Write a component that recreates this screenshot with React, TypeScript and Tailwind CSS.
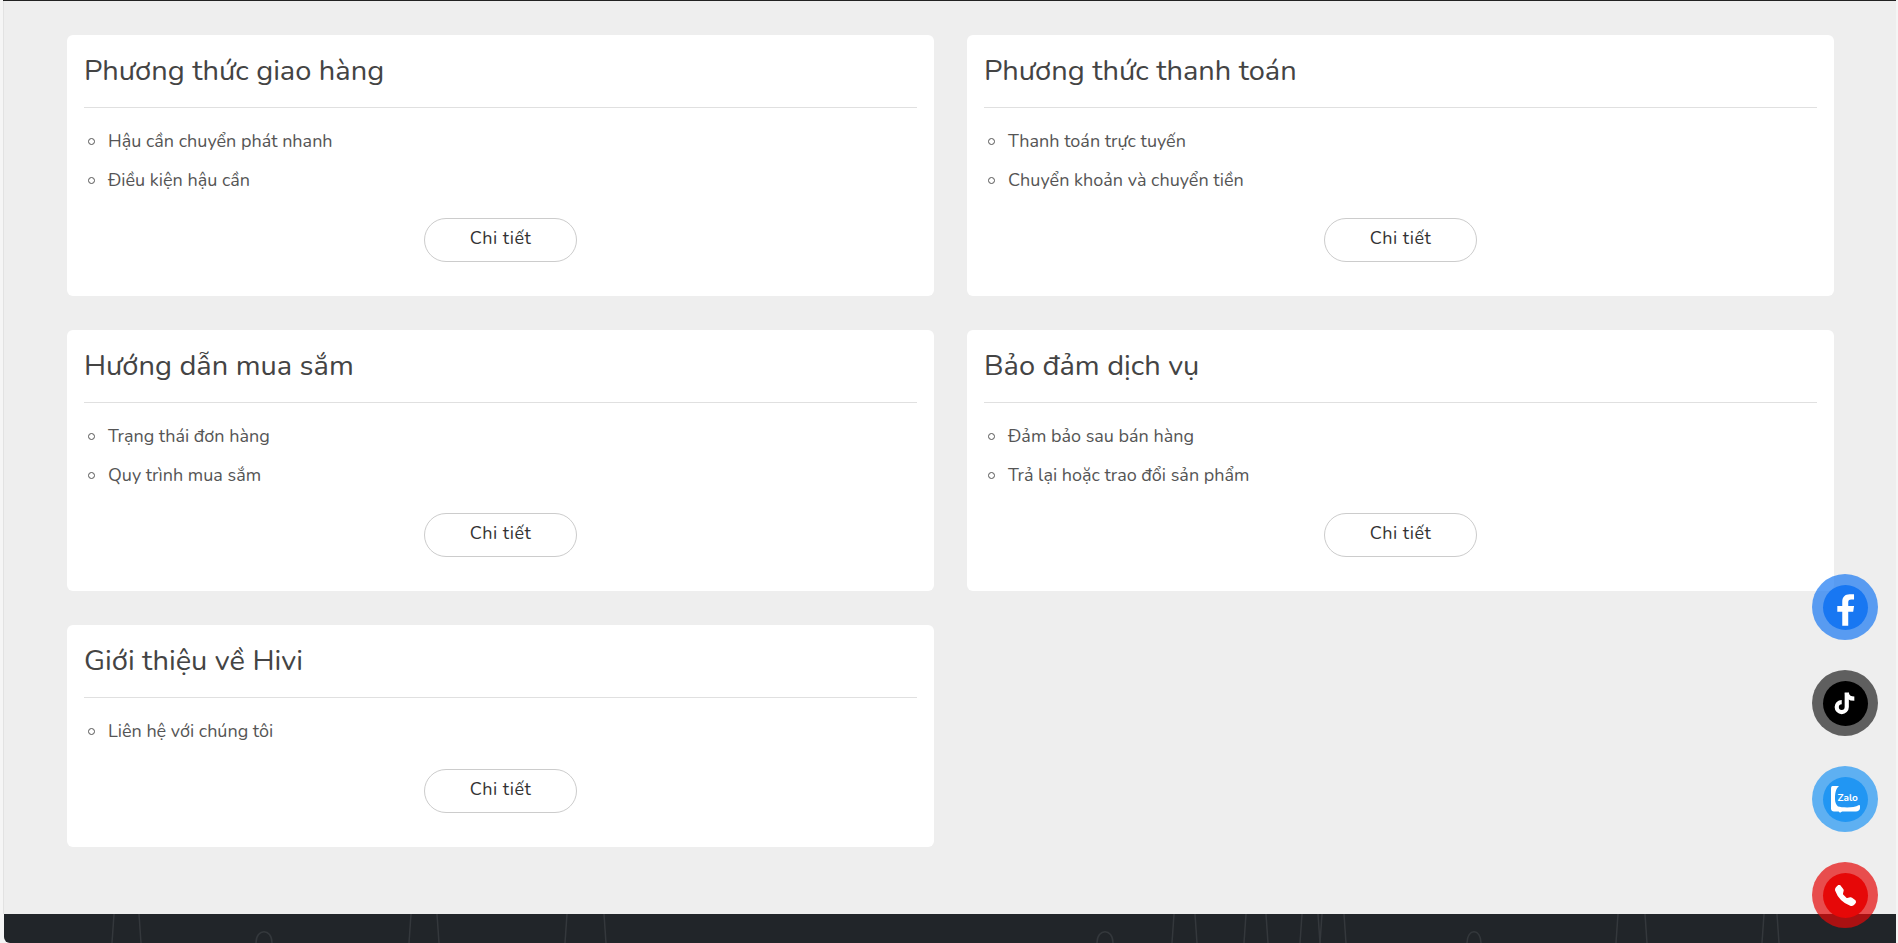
import { BsTelephoneFill } from "react-icons/bs";

const FONT = "font-['Nunito','Noto_Sans','Open_Sans',sans-serif]";

interface CardProps {
  title: string;
  items: string[];
}

const cards: CardProps[] = [
  {
    title: "Phương thức giao hàng",
    items: ["Hậu cần chuyển phát nhanh", "Điều kiện hậu cần"],
  },
  {
    title: "Phương thức thanh toán",
    items: ["Thanh toán trực tuyến", "Chuyển khoản và chuyển tiền"],
  },
  {
    title: "Hướng dẫn mua sắm",
    items: ["Trạng thái đơn hàng", "Quy trình mua sắm"],
  },
  {
    title: "Bảo đảm dịch vụ",
    items: ["Đảm bảo sau bán hàng", "Trả lại hoặc trao đổi sản phẩm"],
  },
  {
    title: "Giới thiệu về Hivi",
    items: ["Liên hệ với chúng tôi"],
  },
];

function Card({ title, items }: CardProps) {
  return (
    <div className="rounded-md bg-white px-[17px] pt-[14px] pb-[34px]">
      <h2 className="h-[59px] border-b border-[#e0e0e0] text-[29px] leading-[44px] text-[#444]">
        {title}
      </h2>
      <ul className="pt-[14px]">
        {items.map((item) => (
          <li key={item} className="flex h-[39px] items-center text-[18px] text-[#555]">
            <span className="ml-[4px] h-[7px] w-[7px] rounded-full border border-[#555]" />
            <span className="ml-[13px]">{item}</span>
          </li>
        ))}
      </ul>
      <div className="mt-[18px] flex justify-center">
        <button className="h-[44px] w-[153px] rounded-full border border-[#ccc] pb-[3px] text-[18px] tracking-[0.5px] text-[#333]">
          Chi tiết
        </button>
      </div>
    </div>
  );
}

function FooterLines() {
  const spikes = [
    [108, 137],
    [405, 435],
    [561, 602],
    [1168, 1193],
    [1240, 1264],
    [1296, 1316],
    [1316, 1342],
    [1612, 1643],
    [1758, 1775],
  ];
  const arcs = [
    [260, 8],
    [1101, 8],
    [1470, 7],
  ];
  return (
    <svg className="h-full w-full" fill="none" stroke="#34383c" strokeWidth="1.5">
      {spikes.map(([a, b]) => (
        <g key={a}>
          <path d={`M${a + 2} 0 L${a} 29`} />
          <path d={`M${b - 2} 0 L${b} 29`} />
        </g>
      ))}
      {arcs.map(([x, r]) => (
        <path key={x} d={`M${x - r} 29 C${x - r} 14 ${x + r} 14 ${x + r} 29`} />
      ))}
    </svg>
  );
}

function FloatButton({
  outer,
  inner,
  children,
}: {
  outer: string;
  inner: string;
  children: React.ReactNode;
}) {
  return (
    <div className={`flex h-[66px] w-[66px] items-center justify-center rounded-full ${outer}`}>
      <div className={`flex h-[45px] w-[45px] items-center justify-center overflow-hidden rounded-full ${inner}`}>
        {children}
      </div>
    </div>
  );
}

export default function App() {
  return (
    <div className={`relative flex h-[943px] flex-col overflow-hidden bg-[#f5f5f5] pr-[2px] pl-[3px] ${FONT}`}>
      <div className="h-px bg-[#222]" />
      <main className="flex-1 border-l border-[#e2e2e2] bg-[#eeeeee] pt-[34px] pr-[62px] pl-[63px]">
        <div className="grid grid-cols-2 gap-x-[33px] gap-y-[34px]">
          {cards.map((card) => (
            <Card key={card.title} {...card} />
          ))}
        </div>
      </main>
      <footer className="ml-px h-[29px] rounded-bl-md bg-[#212529]">
        <FooterLines />
      </footer>

      <div className="absolute top-[574px] right-[20px] flex flex-col gap-[30px]">
        <FloatButton outer="bg-[#1877f2]/70" inner="bg-[#1877f2]">
          <svg viewBox="0 0 24 24" className="mt-[4px] ml-[1px] h-[41px] w-[41px] shrink-0" fill="#fff">
            <path d="M13.6 21.5v-8.200h2.900l.5-3.400h-3.400V7.800c0-1 .4-1.700 1.800-1.700H17V3.100c-.3 0-1.400-.1-2.600-.1-2.600 0-4.300 1.600-4.300 4.400v2.500H7.200v3.400h2.900v8.200z" />
          </svg>
        </FloatButton>
        <FloatButton outer="bg-black/60" inner="bg-black">
          <svg viewBox="0 0 24 24" className="h-[28px] w-[28px]" fill="none" stroke="#fff" strokeWidth="3.6">
            <path d="M13.500 3v12.500a4.300 4.300 0 1 1-4.300-4.300" />
            <path d="M13.500 3.500c.5 3 3 4.800 6.500 4.800" />
          </svg>
        </FloatButton>
        <FloatButton outer="bg-[#2196f3]/70" inner="bg-[#2196f3]">
          <div className="relative h-[27px] w-[29px]">
            <svg viewBox="0 0 29 27" className="absolute inset-0 h-full w-full" fill="#fff">
              <path d="M1.500 0H8C4.500 3 4 8 4 13c0 3 1 6 3 7.500 4 1 15 2 21-1.500.6 0 1 .5 1 1v2c0 2-2 3.500-4 3.500H12c-1.500 0-2 .5-3 1.500-.5-1-1-1.500-2-1.500H3c-1.700 0-3-1.300-3-3V3c0-1.700.5-3 1.500-3z" />
            </svg>
            <span className="absolute top-[6px] left-[7px] text-[10px] leading-[12px] font-bold text-white">
              Zalo
            </span>
          </div>
        </FloatButton>
        <FloatButton outer="bg-[#e60808]/70" inner="bg-[#e60808]">
          <BsTelephoneFill size={21} color="#fff" />
        </FloatButton>
      </div>
    </div>
  );
}
